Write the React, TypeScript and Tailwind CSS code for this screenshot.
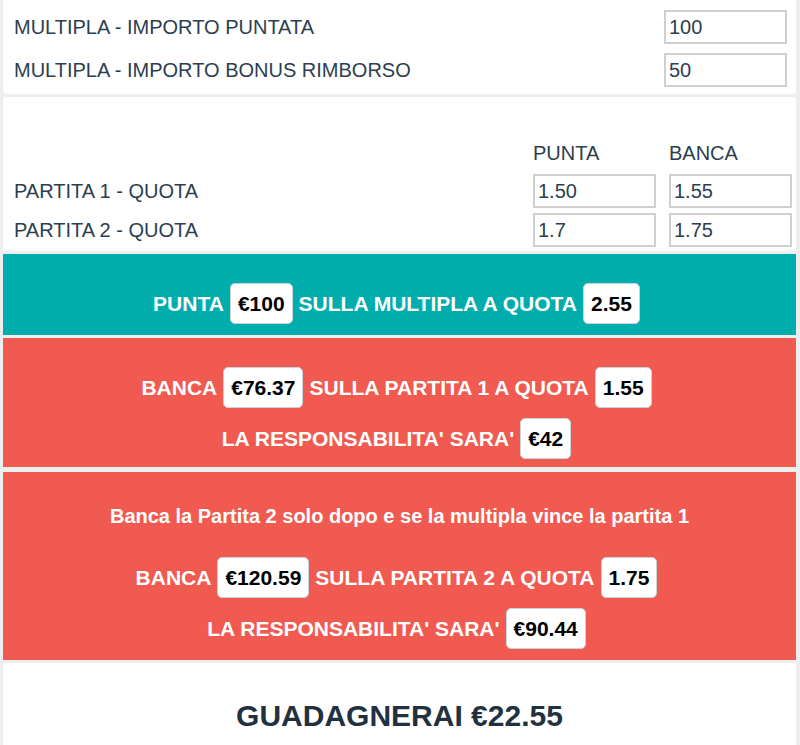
import React from "react";

const font = { fontFamily: '"Liberation Sans", Arial, Helvetica, sans-serif' };

function Inp({ v }: { v: string }) {
  return (
    <div className="w-[123px] h-[34px] shrink-0 border-2 border-[#cfcfcf] bg-white flex items-center pl-[3px] text-[20px] text-[#2c3e50]">
      {v}
    </div>
  );
}

function Box({ v }: { v: string }) {
  return (
    <span className="inline-flex items-center h-[41px] px-[7px] mx-[6px] bg-white border border-[#c9d3dc] rounded-[5px] text-black">
      {v}
    </span>
  );
}

export default function App() {
  return (
    <div
      style={font}
      className="w-[800px] h-[745px] bg-[#eeeeee] pl-[3px] pr-[4px] flex flex-col gap-[3px] overflow-hidden text-[#2c3e50]"
    >
      {/* Panel 1 */}
      <div className="bg-white rounded-b-[3px] h-[94px] pt-[10px] pl-[11px] pr-[9px] flex flex-col gap-[9px] text-[20px]">
        <div className="flex items-center justify-between">
          <span>MULTIPLA - IMPORTO PUNTATA</span>
          <Inp v="100" />
        </div>
        <div className="flex items-center justify-between">
          <span>MULTIPLA - IMPORTO BONUS RIMBORSO</span>
          <Inp v="50" />
        </div>
      </div>

      {/* Panel 2 */}
      <div className="bg-white rounded-t-[3px] h-[154px] pt-[44px] pl-[11px] pr-[4px] flex flex-col text-[20px]">
        <div className="flex items-center h-[24px] mb-[9px]">
          <span className="flex-1" />
          <span className="w-[136px]">PUNTA</span>
          <span className="w-[123px]">BANCA</span>
        </div>
        <div className="flex items-center gap-[13px] mb-[5px]">
          <span className="flex-1">PARTITA 1 - QUOTA</span>
          <Inp v="1.50" />
          <Inp v="1.55" />
        </div>
        <div className="flex items-center gap-[13px]">
          <span className="flex-1">PARTITA 2 - QUOTA</span>
          <Inp v="1.7" />
          <Inp v="1.75" />
        </div>
      </div>

      {/* Teal */}
      <div className="bg-[#00adad] h-[81px] flex items-end justify-center pb-[11px] text-white font-bold text-[21px]">
        <div className="flex items-center">
          PUNTA <Box v="€100" /> SULLA MULTIPLA A QUOTA <Box v="2.55" />
        </div>
      </div>

      {/* Red 1 */}
      <div className="bg-[#f15a51] h-[129px] flex flex-col items-center pt-[29px] gap-[10px] text-white font-bold text-[21px]">
        <div className="flex items-center">
          BANCA <Box v="€76.37" /> SULLA PARTITA 1 A QUOTA <Box v="1.55" />
        </div>
        <div className="flex items-center">
          LA RESPONSABILITA' SARA' <Box v="€42" />
        </div>
      </div>

      {/* Red 2 */}
      <div className="bg-[#f15a51] h-[188px] mt-[2px] flex flex-col items-center pt-[32px] text-white font-bold text-[21px]">
        <div className="h-[24px] flex items-center mb-[29px] text-[20px]">
          Banca la Partita 2 solo dopo e se la multipla vince la partita 1
        </div>
        <div className="flex items-center mb-[10px]">
          BANCA <Box v="€120.59" /> SULLA PARTITA 2 A QUOTA <Box v="1.75" />
        </div>
        <div className="flex items-center">
          LA RESPONSABILITA' SARA' <Box v="€90.44" />
        </div>
      </div>

      {/* Result */}
      <div className="bg-white flex-1 flex justify-center pt-[35px] text-[30px] leading-[36px] font-bold text-[#22313f]">
        GUADAGNERAI €22.55
      </div>
    </div>
  );
}
